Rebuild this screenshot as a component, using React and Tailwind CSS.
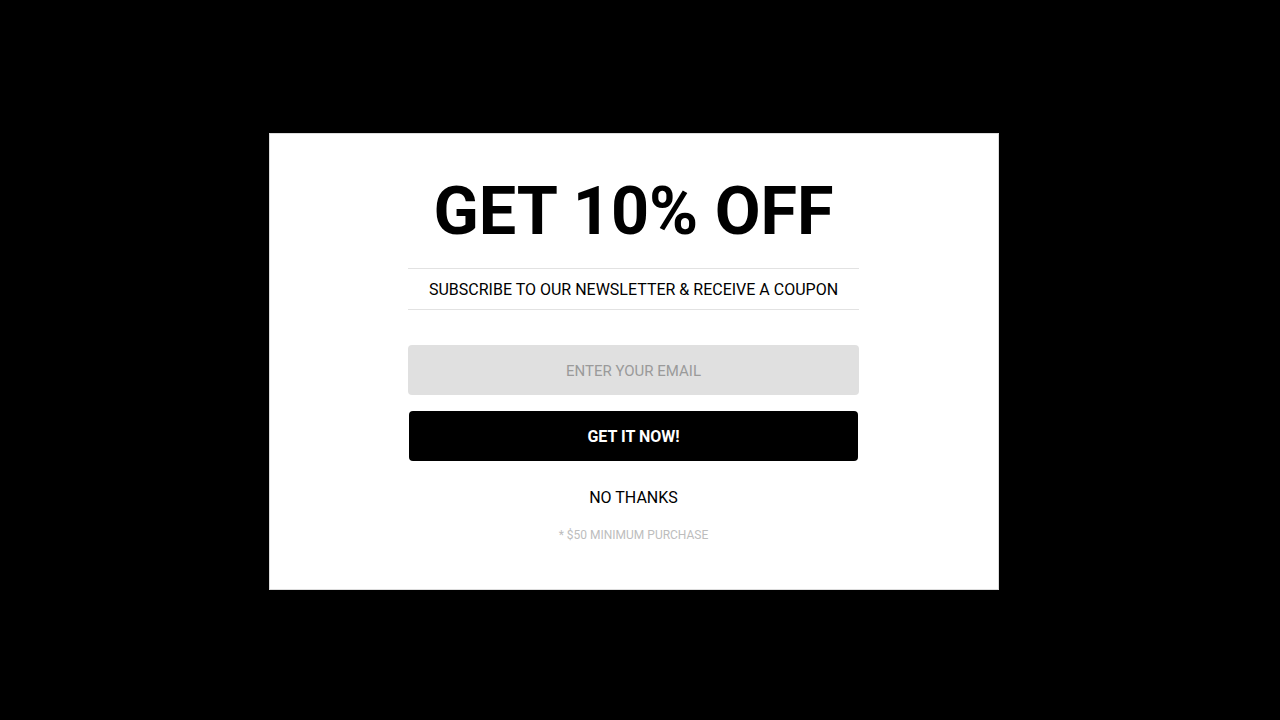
export default function App() {
  return (
    <div className="w-[1280px] h-[720px] bg-black pt-[133px] pl-[269px]" style={{ fontFamily: "Roboto, 'Noto Sans', sans-serif" }}>
      <div className="w-[730px] h-[457px] bg-white border border-[#dcdcdc] flex flex-col items-start pl-[138px]">
        <div className="mt-[39px] w-[451px] h-[76px] flex items-center justify-center text-[66.5px] font-bold leading-none text-black">GET 10% OFF</div>
        <div className="mt-[19px] w-[451px] h-[42px] pt-[2px] border-y border-[#e2e2e2] flex items-center justify-center text-[16px] text-black">
          SUBSCRIBE TO OUR NEWSLETTER &amp; RECEIVE A COUPON
        </div>
        <input
          type="text"
          placeholder="ENTER YOUR EMAIL"
          className="mt-[35px] w-[451px] h-[50px] pt-[2px] bg-[#e0e0e0] rounded-[4px] text-center text-[15px] placeholder:text-[#9a9a9a] outline-none"
        />
        <button className="mt-[16px] ml-[1px] w-[449px] h-[50px] pt-[2px] bg-black text-white rounded-[4px] text-[16px] font-bold">GET IT NOW!</button>
        <div className="mt-[26px] w-[451px] h-[22px] flex items-center justify-center text-[16px] text-black">NO THANKS</div>
        <div className="mt-[17px] w-[451px] text-center text-[12px] text-[#bdbdbd]">* $50 MINIMUM PURCHASE</div>
      </div>
    </div>
  );
}
